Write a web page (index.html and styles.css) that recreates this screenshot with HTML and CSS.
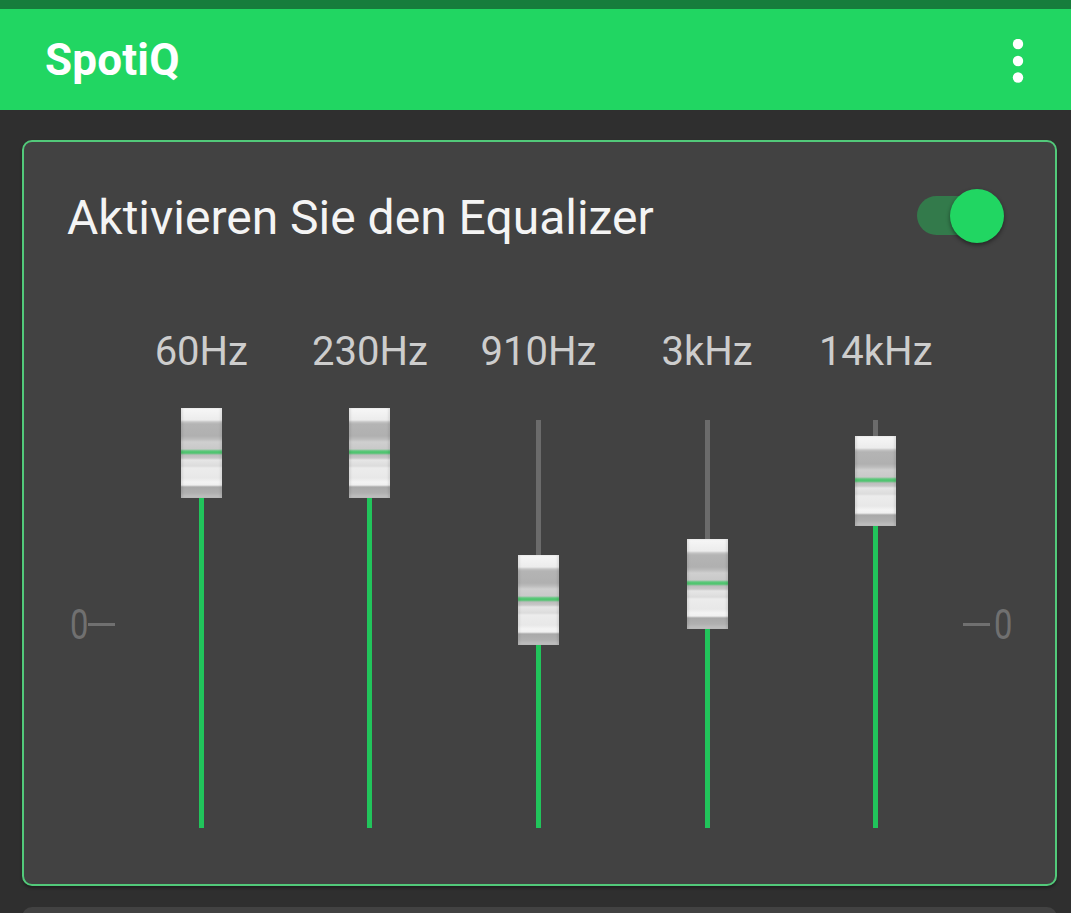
FILE: index.html
```html
<!DOCTYPE html>
<html lang="de">
<head>
    <meta charset="UTF-8">
    <meta name="viewport" content="width=device-width, initial-scale=1.0">
    <title>SpotiQ</title>
    <link rel="stylesheet" href="styles.css">
</head>
<body>

<div class="status"></div>
<header class="appbar">
    <h1 class="brand">SpotiQ</h1>
    <svg class="menu" width="12" height="44" viewBox="0 0 12 44">
        <circle cx="6" cy="5" r="5.2" fill="#fff"/>
        <circle cx="6" cy="22" r="5.2" fill="#fff"/>
        <circle cx="6" cy="38.5" r="5.2" fill="#fff"/>
    </svg>
</header>

<main class="content">
    <section class="card">
        <div class="card-head">
            <span class="card-title">Aktivieren Sie den Equalizer</span>
            <div class="switch">
                <div class="switch-track"></div>
                <div class="switch-thumb"></div>
            </div>
        </div>

        <div class="eq">
            <div></div>
            <div class="band-label">60Hz</div>
            <div class="band-label">230Hz</div>
            <div class="band-label">910Hz</div>
            <div class="band-label">3kHz</div>
            <div class="band-label">14kHz</div>
            <div></div>

            <div class="zero zero-left"><span class="zero-num">0</span><span class="zero-dash"></span></div>
            <div class="slider">
                <div class="track"></div>
                <div class="fill" style="top: 45px"></div>
                <div class="thumb" style="top: 0px"></div>
            </div>
            <div class="slider">
                <div class="track"></div>
                <div class="fill" style="top: 45px"></div>
                <div class="thumb" style="top: 0px"></div>
            </div>
            <div class="slider">
                <div class="track"></div>
                <div class="fill" style="top: 192px"></div>
                <div class="thumb" style="top: 147px"></div>
            </div>
            <div class="slider">
                <div class="track"></div>
                <div class="fill" style="top: 176px"></div>
                <div class="thumb" style="top: 131px"></div>
            </div>
            <div class="slider">
                <div class="track"></div>
                <div class="fill" style="top: 73px"></div>
                <div class="thumb" style="top: 28px"></div>
            </div>
            <div class="zero zero-right"><span class="zero-dash"></span><span class="zero-num">0</span></div>
        </div>
    </section>

    <section class="card card-next"></section>
</main>

</body>
</html>
```

FILE: styles.css
```css
body {
    font-family: Roboto, "Liberation Sans", sans-serif;
    margin: 0;
    padding: 0;
    background-color: #2f2f2f;
    overflow: hidden;
}

.status {
    height: 9px;
    background-color: #167d3c;
}

.appbar {
    height: 101px;
    background-color: #21d662;
    display: flex;
    align-items: center;
    justify-content: space-between;
    padding: 0 47px 0 45px;
}

.brand {
    margin: 0;
    font-size: 44px;
    font-weight: bold;
    color: #fff;
    letter-spacing: 0.2px;
}

.menu {
    display: block;
    margin-top: 2px;
}

.content {
    padding: 30px 14px 0 22px;
}

.card {
    background-color: #424242;
    border: 2px solid #52c97a;
    border-radius: 10px;
    box-shadow: 0 2px 3px rgba(0, 0, 0, 0.35);
    padding: 48px 45px 56px 44px;
}

.card-head {
    display: flex;
    align-items: center;
    justify-content: space-between;
    height: 56px;
}

.card-title {
    font-size: 48px;
    line-height: 56px;
    color: #f4f4f4;
    margin-left: -1px;
}

.switch {
    position: relative;
    width: 87px;
    height: 54px;
    margin-right: 6px;
    margin-top: -4px;
}

.switch-track {
    position: absolute;
    left: 0;
    top: 7px;
    width: 76px;
    height: 39px;
    border-radius: 20px;
    background-color: #337a4b;
}

.switch-thumb {
    position: absolute;
    right: 0;
    top: 0;
    width: 54px;
    height: 54px;
    border-radius: 50%;
    background-color: #21d662;
    box-shadow: 0 2px 4px rgba(0, 0, 0, 0.45);
}

.eq {
    display: grid;
    grid-template-columns: 49px repeat(5, 1fr) 50px;
    margin-top: 82px;
}

.band-label {
    font-size: 40px;
    line-height: 48px;
    color: #cdcdcd;
    text-align: center;
    margin-bottom: 32px;
}

.slider {
    position: relative;
    width: 41px;
    height: 420px;
    margin: 0 auto;
}

.track {
    position: absolute;
    left: 18px;
    width: 5px;
    top: 12px;
    bottom: 0;
    background-color: #6b6b6b;
}

.fill {
    position: absolute;
    left: 18px;
    width: 5px;
    bottom: 0;
    background-color: #21c45b;
}

.thumb {
    position: absolute;
    left: 0;
    width: 41px;
    height: 90px;
    background: linear-gradient(to bottom,
        #f7f7f7 0, #ececec 12px, #c4c4c4 14px, #b4b4b4 16px, #b0b0b0 28px,
        #bcbcbc 31px, #cfcfcf 34px, #c9c9c9 41px, #5cc77a 43px, #4cc46d 45px,
        #bdbdbd 47px, #c8c8c8 50px, #e6e6e6 52px, #dcdcdc 58px, #ececec 60px,
        #e8e8e8 70px, #f4f4f4 74px, #f0f0f0 77px, #a9a9a9 79px, #b0b0b0 85px,
        #c4c4c4 90px);
    box-shadow: inset 2px 0 2px rgba(0, 0, 0, 0.08), inset -2px 0 2px rgba(0, 0, 0, 0.08);
}

.zero {
    display: flex;
    align-items: center;
    height: 408px;
    padding-top: 12px;
    color: #707070;
    font-size: 42px;
}

.zero-left {
    justify-content: flex-start;
}

.zero-right {
    justify-content: flex-end;
}

.zero-num {
    display: inline-block;
    width: 18px;
    text-align: center;
    transform: scaleX(0.78);
}

.zero-dash {
    display: inline-block;
    width: 27px;
    height: 3px;
    margin: 0 2px;
    background-color: #707070;
}

.card-next {
    margin-top: 21px;
    height: 100px;
    border: none;
    padding: 0;
    box-shadow: none;
}
```
